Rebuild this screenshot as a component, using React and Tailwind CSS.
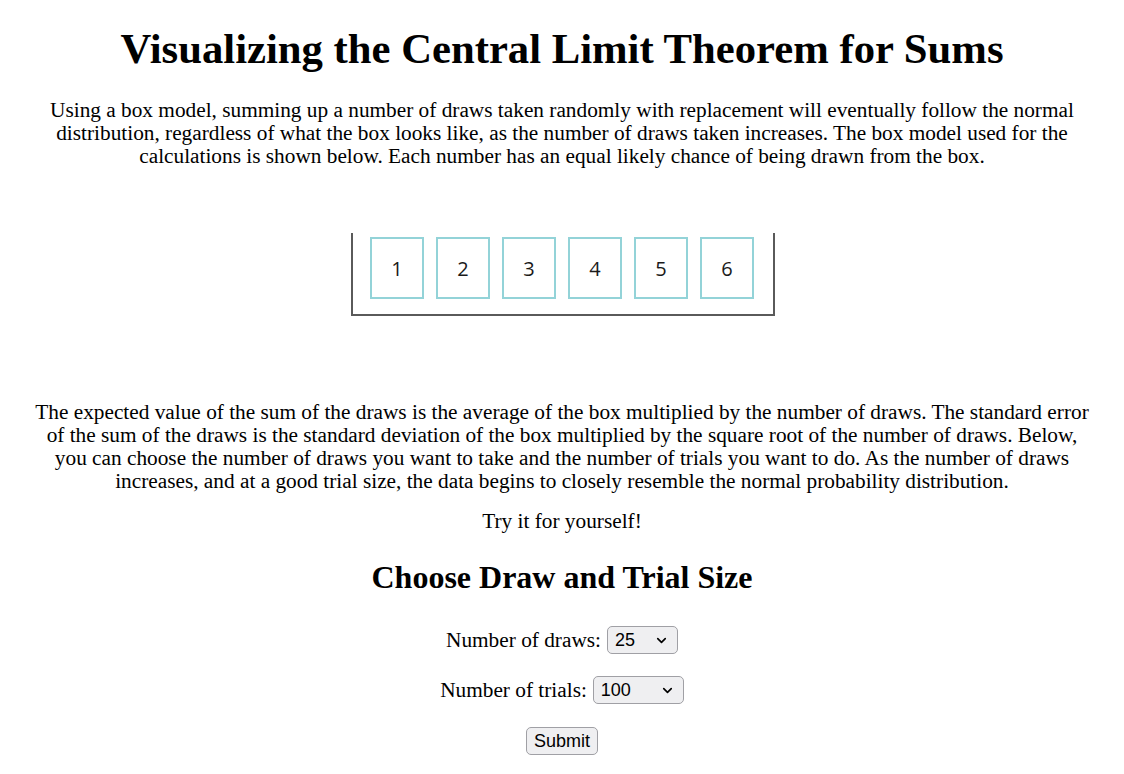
import React, { useState } from 'react';
import { ChevronDown } from 'lucide-react';

// 상자 모델 그림: 1~6 숫자 카드
const BoxModel = () => {
  const tickets = [1, 2, 3, 4, 5, 6];
  return (
    <div className="flex justify-center mt-[65px] pl-[2px]">
      <div className="w-[424px] h-[83px] border-l-2 border-r-2 border-b-2 border-[#5a5a5a] flex items-start gap-[12px] pl-[17px] pt-[4px]">
        {tickets.map(n => (
          <div
            key={n}
            className="w-[54px] h-[62px] border-2 border-[#93d3d8] flex items-center justify-center text-[20px] font-medium text-[#1a1a1a] [font-family:'Open_Sans','Liberation_Sans',sans-serif]"
          >
            {n}
          </div>
        ))}
      </div>
    </div>
  );
};

// 셀렉트 박스
const Select = ({ value, options, onChange, width }) => (
  <span className={`relative inline-flex items-center align-middle ${width}`}>
    <select
      value={value}
      onChange={e => onChange(e.target.value)}
      className="appearance-none w-full h-[28px] pl-[7px] pr-6 rounded-[5px] border border-[#a0a0a5] bg-[#efeff1] text-[18px] text-black [font-family:'Liberation_Sans',Arial,sans-serif] leading-none"
    >
      {options.map(o => (
        <option key={o} value={o}>{o}</option>
      ))}
    </select>
    <ChevronDown size={15} strokeWidth={2.6} className="absolute right-[9px] top-[7px] pointer-events-none text-black" />
  </span>
);

export default function App() {
  const [draws, setDraws] = useState('25');
  const [trials, setTrials] = useState('100');

  return (
    <div className="min-h-screen bg-white text-black text-center text-[21.3px] leading-[23px] [font-family:'Liberation_Serif','Times_New_Roman',serif] px-[10px]">
      <h1 className="text-[42.7px] leading-[46px] font-bold pt-[26px]">
        Visualizing the Central Limit Theorem for Sums
      </h1>

      <p className="mt-[27px] mx-auto w-[1060px]">
        Using a box model, summing up a number of draws taken randomly with replacement will eventually follow the normal
        distribution, regardless of what the box looks like, as the number of draws taken increases. The box model used for the
        calculations is shown below. Each number has an equal likely chance of being drawn from the box.
      </p>

      <BoxModel />

      <p className="mt-[85px] mx-auto w-[1060px]">
        The expected value of the sum of the draws is the average of the box multiplied by the number of draws. The standard error
        of the sum of the draws is the standard deviation of the box multiplied by the square root of the number of draws. Below,
        you can choose the number of draws you want to take and the number of trials you want to do. As the number of draws
        increases, and at a good trial size, the data begins to closely resemble the normal probability distribution.
      </p>

      <p className="mt-[17px]">Try it for yourself!</p>

      <h2 className="text-[32px] leading-[35px] font-bold mt-[27px]">Choose Draw and Trial Size</h2>

      <div className="mt-[30px] h-[30px] flex items-center justify-center gap-[6px]">
        <span>Number of draws:</span>
        <Select value={draws} onChange={setDraws} options={['5', '10', '25', '50', '100']} width="w-[71px]" />
      </div>

      <div className="mt-[20px] h-[30px] flex items-center justify-center gap-[6px]">
        <span>Number of trials:</span>
        <Select value={trials} onChange={setTrials} options={['10', '100', '1000', '10000']} width="w-[91px]" />
      </div>

      <div className="mt-[22px] flex justify-center">
        <button className="h-[28px] px-[7px] rounded-[5px] border border-[#a0a0a5] bg-[#efeff1] text-[18px] leading-none [font-family:'Liberation_Sans',Arial,sans-serif]">
          Submit
        </button>
      </div>
    </div>
  );
}
